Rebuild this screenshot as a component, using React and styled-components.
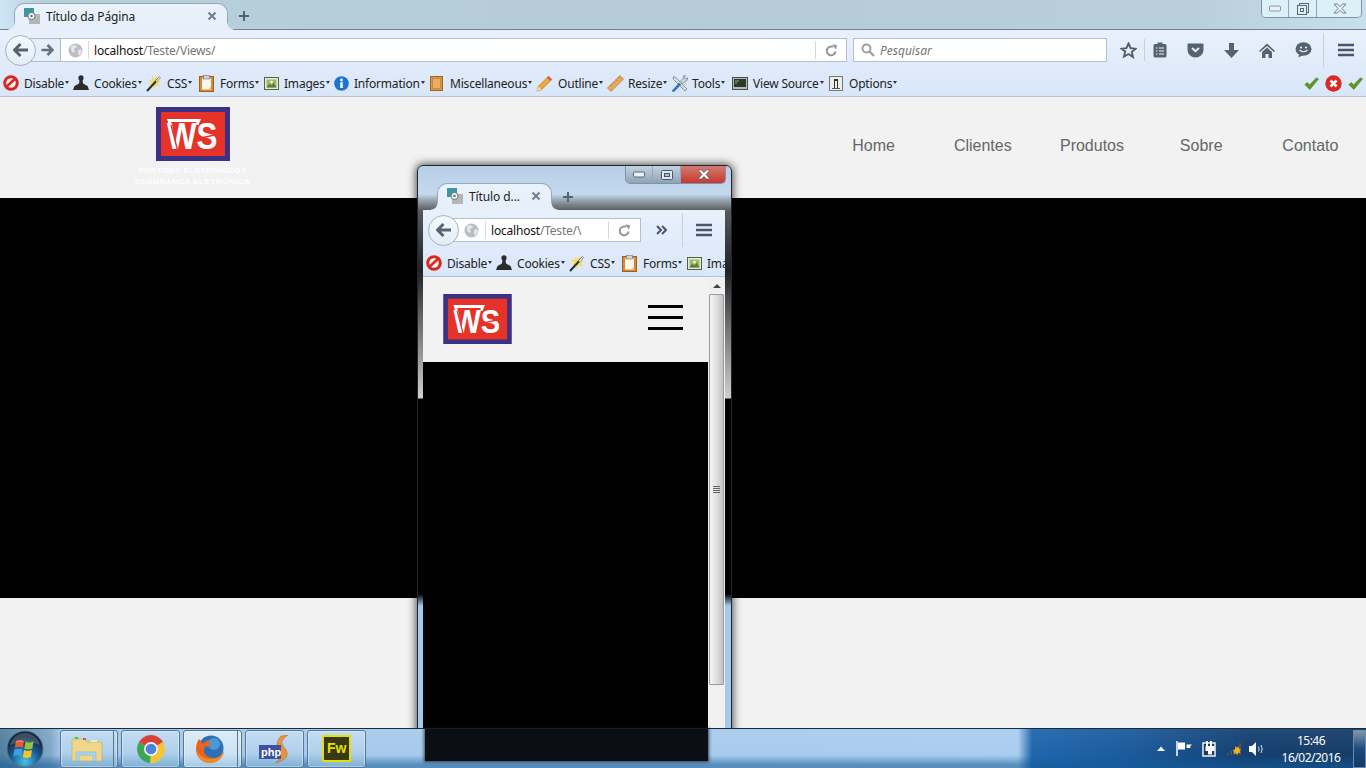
import React from "react";
import styled, { createGlobalStyle } from "styled-components";

const UI_FONT = `"Noto Sans", "Open Sans", sans-serif`;

const Global = createGlobalStyle`
  html, body { margin: 0; padding: 0; background: #f2f2f2; }
  * { box-sizing: border-box; }
`;

const Desktop = styled.div`
  position: relative;
  width: 1366px;
  height: 768px;
  overflow: hidden;
  display: flex;
  flex-direction: column;
  font-family: ${UI_FONT};
`;

const Browser = styled.div`
  flex: 1;
  min-height: 0;
  display: flex;
  flex-direction: column;
`;

/* ---------- tab strip ---------- */
const TabRow = styled.div`
  position: relative;
  height: ${p => p.$h}px;
  padding-left: 14px;
  display: flex;
  align-items: flex-end;
  flex-shrink: 0;
  background: ${p => p.$bg};
  border-bottom: ${p => (p.$line ? "1px solid #6f8294" : "0")};
`;

const TabShape = styled.div`
  position: relative;
  width: ${p => p.$w}px;
  height: 27px;
  margin-bottom: ${p => (p.$line ? "-1px" : "0")};
  padding: 0 10px 2px 9px;
  display: flex;
  align-items: center;
  gap: 5px;
  background: linear-gradient(#eaf2fb, #e6eff9);
  border: 1px solid #93a8bb;
  border-bottom: 0;
  border-radius: 10px 10px 0 0;
  color: #222;
  font-size: 12px;
  letter-spacing: -0.1px;

  &::before,
  &::after {
    content: "";
    position: absolute;
    bottom: 0;
    width: 7px;
    height: 7px;
  }
  &::before {
    left: -7px;
    background: radial-gradient(circle at 0 0, transparent 6px, #e6eff9 7px);
  }
  &::after {
    right: -7px;
    background: radial-gradient(circle at 100% 0, transparent 6px, #e6eff9 7px);
  }
`;

const TabTitle = styled.span`
  flex: 1;
  white-space: nowrap;
`;

const NewTab = styled.span`
  width: 28px;
  margin-left: 2px;
  height: 27px;
  display: flex;
  align-items: center;
  justify-content: center;
`;

const WinControls = styled.div`
  margin-left: auto;
  margin-right: ${p => p.$mr}px;
  align-self: flex-start;
  width: 101px;
  height: 18px;
  display: grid;
  grid-template-columns: 27px 28px 46px;
  border: 1px solid #7f93a6;
  border-top: 0;
  border-radius: 0 0 5px 5px;
  overflow: hidden;
`;

const WinCell = styled.div`
  display: flex;
  align-items: center;
  justify-content: center;
  border-right: ${p => (p.$last ? "0" : "1px solid #8fa5b8")};
  background: ${p => p.$bg};
`;

/* ---------- nav bar ---------- */
const NavRow = styled.div`
  height: 40px;
  flex-shrink: 0;
  display: flex;
  align-items: center;
  padding-left: ${p => p.$pl}px;
  background: linear-gradient(#e8f1fb, #dfeafa);
`;

const BackCircle = styled.div`
  position: relative;
  z-index: 2;
  width: 31px;
  height: 31px;
  flex-shrink: 0;
  display: flex;
  align-items: center;
  justify-content: center;
  border-radius: 50%;
  border: 1px solid #a3b3c2;
  background: linear-gradient(#f5f9fd, #e3ecf6);
`;

const ForwardSeg = styled.div`
  width: 31px;
  margin-left: -6px;
  height: 24px;
  padding-left: 5px;
  display: flex;
  align-items: center;
  justify-content: center;
  background: #e6eff9;
  border: 1px solid #aebdcc;
  border-left: 0;
  flex-shrink: 0;
`;

const UrlBar = styled.div`
  width: ${p => p.$w}px;
  height: ${p => p.$h}px;
  margin-left: ${p => p.$ml}px;
  padding-left: ${p => p.$pl}px;
  display: flex;
  align-items: center;
  background: #fff;
  border: 1px solid #b2c0cf;
  border-left-width: ${p => (p.$flush ? 0 : 1)}px;
  flex-shrink: 0;
  overflow: hidden;
`;

const UrlSep = styled.i`
  width: 1px;
  height: 18px;
  margin: ${p => p.$m};
  background: #d4dae0;
  flex-shrink: 0;
`;

const UrlText = styled.span`
  flex: 1;
  min-width: 0;
  overflow: hidden;
  white-space: nowrap;
  font-size: 12px;
  letter-spacing: -0.2px;
  color: #111;
  b {
    font-weight: 400;
    color: #777;
  }
`;

const SearchBar = styled.div`
  width: 254px;
  height: 24px;
  margin-left: 6px;
  padding-left: 7px;
  display: flex;
  align-items: center;
  gap: 5px;
  flex-shrink: 0;
  background: #fff;
  border: 1px solid #b2c0cf;
  font-size: 12px;
  font-style: italic;
  color: #767676;
`;

const ToolSlot = styled.span`
  width: ${p => p.$w}px;
  height: 30px;
  flex-shrink: 0;
  margin-left: ${p => p.$ml || 0}px;
  display: flex;
  align-items: center;
  justify-content: center;
`;

const ToolSep = styled.i`
  width: 1px;
  height: ${p => p.$h}px;
  background: #c4d0dc;
  flex-shrink: 0;
`;

/* ---------- bookmarks ---------- */
const BookRow = styled.div`
  height: 27px;
  flex-shrink: 0;
  padding-left: 3px;
  display: flex;
  align-items: center;
  overflow: hidden;
  background: linear-gradient(#dfeafa, #d8e7f8);
  border-bottom: 1px solid #b4c4d4;
`;

const BookItem = styled.div`
  width: ${p => p.$w}px;
  flex-shrink: 0;
  display: flex;
  align-items: center;
  gap: ${p => p.$gap || 4}px;
  font-size: 12px;
  letter-spacing: -0.2px;
  color: #222;
  white-space: nowrap;
`;

const Caret = styled.i`
  display: inline-block;
  width: 0;
  height: 0;
  margin: 0 0 3px 1px;
  vertical-align: middle;
  border-left: 2px solid transparent;
  border-right: 2px solid transparent;
  border-top: 3px solid #333;
`;

const BookRight = styled.div`
  margin-left: auto;
  margin-right: 3px;
  display: flex;
  align-items: center;
  gap: 6px;
`;

/* ---------- page in the big window ---------- */
const PageHeader = styled.header`
  height: 101px;
  flex-shrink: 0;
  display: flex;
  justify-content: space-between;
  background: #f2f2f2;
`;

const Brand = styled.div`
  width: 385px;
  padding-top: 10px;
  display: flex;
  flex-direction: column;
  align-items: center;
`;

const Tagline = styled.div`
  margin-top: 4px;
  font-family: "Liberation Sans", Arial, sans-serif;
  font-size: 8px;
  line-height: 11px;
  font-weight: 700;
  letter-spacing: 0.5px;
  color: #fdfdfd;
  text-align: center;
  white-space: nowrap;
`;

const SiteNav = styled.nav`
  width: 547px;
  padding: 0 1px 3px 0;
  display: grid;
  grid-template-columns: repeat(5, 1fr);
  align-items: center;
`;

const SiteLink = styled.a`
  text-align: center;
  font-family: "Liberation Sans", Arial, sans-serif;
  font-size: 16px;
  color: #666;
`;

const Hero = styled.div`
  height: 400px;
  flex-shrink: 0;
  background: #000;
`;

const Filler = styled.div`
  flex: 1;
  background: #f2f2f2;
`;

/* ---------- resized window ---------- */
const SmallWindow = styled.div`
  position: absolute;
  left: 417px;
  top: 165px;
  width: 315px;
  height: 603px;
  padding: 0 6px 0 5px;
  display: flex;
  flex-direction: column;
  border: 1px solid #20262c;
  border-radius: 6px 6px 0 0;
  box-shadow: 0 0 8px 1px rgba(0, 0, 0, 0.7);
  background: linear-gradient(
    #b6cfe7 0,
    #c4d9ee 28px,
    #8d979f 36px,
    #55595e 45px,
    #1e2226 105px,
    #777 165px,
    #cfcfcf 232px,
    #000 233px,
    #000 428px,
    #a5c9ee 440px
  );
`;

const Viewport = styled.div`
  flex: 1;
  min-height: 0;
  display: flex;
`;

const ViewContent = styled.div`
  width: 285px;
  display: flex;
  flex-direction: column;
`;

const MobileHeader = styled.div`
  height: 85px;
  flex-shrink: 0;
  padding: 0 25px 1px 20px;
  display: flex;
  align-items: center;
  justify-content: space-between;
  background: #f2f2f2;
`;

const Burger = styled.div`
  width: 35px;
  margin-bottom: 3px;
  display: flex;
  flex-direction: column;
  gap: 8px;
  i {
    height: 3px;
    background: #000;
  }
`;

const MobileBody = styled.div`
  flex: 1;
  background: #000;
`;

const ScrollBar = styled.div`
  width: 17px;
  display: flex;
  flex-direction: column;
  align-items: center;
  background: #f0f0f0;
`;

const ScrollUp = styled.i`
  margin: 7px 0 6px;
  border-left: 4px solid transparent;
  border-right: 4px solid transparent;
  border-bottom: 4px solid #444;
`;

const ScrollThumb = styled.div`
  width: 15px;
  height: 391px;
  display: flex;
  align-items: center;
  justify-content: center;
  border: 1px solid #9c9c9c;
  border-radius: 1px;
  background: linear-gradient(90deg, #f4f4f4, #e2e2e2 45%, #c2c2c2);
`;

const Grip = styled.div`
  width: 7px;
  display: flex;
  flex-direction: column;
  gap: 1px;
  i {
    height: 1px;
    background: #666;
  }
`;

/* ---------- taskbar ---------- */
const Taskbar = styled.footer`
  position: relative;
  z-index: 3;
  height: 40px;
  flex-shrink: 0;
  display: flex;
  align-items: center;
  border-top: 1px solid #1b2a3a;
  background:
    linear-gradient(rgba(255, 255, 255, 0.06) 0, rgba(255, 255, 255, 0) 26px, rgba(20, 90, 150, 0.55) 36px),
    linear-gradient(
      90deg,
      #4f7f9f 0,
      #7fa7c6 50px,
      #a5c8ea 62px,
      #a9cdef 1018px,
      #1f66ad 1032px,
      #1b5a9c 1130px,
      #143f70 1250px,
      #163c66 1366px
    );
`;

const StartSlot = styled.div`
  width: 60px;
  padding-left: 6px;
  flex-shrink: 0;
  display: flex;
  align-items: center;
`;

const TaskButtons = styled.div`
  display: flex;
  gap: 3px;
`;

const TaskButton = styled.div`
  position: relative;
  width: ${p => p.$w}px;
  height: 38px;
  padding-right: ${p => (p.$stack ? 5 : 0)}px;
  display: flex;
  align-items: center;
  justify-content: center;
  border: 1px solid #567993;
  border-radius: 3px;
  background: ${p =>
    p.$active
      ? "linear-gradient(#dcebf8, #cfe3f5 60%, #a3c9e6)"
      : "linear-gradient(#c2dcf2, #b1d0ec 60%, #7fb0d6)"};
  box-shadow: inset 0 0 0 1px rgba(255, 255, 255, 0.35);

  &::after {
    content: "";
    display: ${p => (p.$stack ? "block" : "none")};
    position: absolute;
    right: 3px;
    top: 0;
    bottom: 0;
    width: 1px;
    background: #567993;
  }
`;

const Refraction = styled.div`
  position: absolute;
  left: 425px;
  top: 0;
  width: 283px;
  height: 32px;
  background: #0b0f15;
  box-shadow: 0 0 3px 1px rgba(11, 15, 21, 0.7);
`;

const Tray = styled.div`
  margin-left: auto;
  display: flex;
  align-items: center;
`;

const TraySlot = styled.span`
  width: ${p => p.$w}px;
  display: flex;
  align-items: center;
  justify-content: center;
`;

const Clock = styled.div`
  width: 84px;
  text-align: center;
  font-size: 12px;
  line-height: 17px;
  letter-spacing: -0.5px;
  color: #fff;
`;

const ShowDesktop = styled.div`
  width: 13px;
  height: 38px;
  border: 1px solid #6f8aa5;
  background: linear-gradient(#7f97ad, #1b4a7d 50%, #123a66);
`;

/* ---------- drawings ---------- */
const Ic = styled.svg`
  display: block;
  flex-shrink: 0;
`;

const Favicon = () => (
  <Ic width="17" height="16" viewBox="0 0 17 16">
    <rect x="0" y="0" width="10" height="9" fill="#3f96a3" />
    <rect x="5" y="6" width="11" height="10" fill="#b5b5b5" />
    <circle cx="7.5" cy="8" r="3.6" fill="#f2f2f2" stroke="#5f7a80" />
    <circle cx="7.5" cy="8" r="1.2" fill="#56757c" />
  </Ic>
);

const TabClose = () => (
  <Ic width="10" height="10" viewBox="0 0 10 10">
    <path d="M1.5 1.5l7 7M8.5 1.5l-7 7" stroke="#75828d" strokeWidth="2.2" />
  </Ic>
);

const Plus = () => (
  <Ic width="12" height="12" viewBox="0 0 12 12">
    <path d="M6 1v10M1 6h10" stroke="#56646f" strokeWidth="2" />
  </Ic>
);

const MinGlyph = ({ c = "#55687a" }) => (
  <Ic width="12" height="7" viewBox="0 0 12 7">
    <rect x="0.5" y="1" width="11" height="5" rx="1" fill="#e8f0f6" stroke={c} />
  </Ic>
);

const RestoreGlyph = () => (
  <Ic width="12" height="12" viewBox="0 0 12 12">
    <rect x="2.5" y="0.5" width="9" height="9" fill="none" stroke="#55687a" />
    <rect x="0.5" y="2.5" width="9" height="9" fill="#e2eef6" stroke="#55687a" />
    <rect x="3.5" y="5.5" width="3" height="3" fill="none" stroke="#55687a" />
  </Ic>
);

const MaxGlyph = () => (
  <Ic width="12" height="10" viewBox="0 0 12 10">
    <rect x="0.5" y="0.5" width="11" height="9" rx="1" fill="#dfe8ef" stroke="#47586a" />
    <rect x="3.5" y="3.5" width="5" height="3" fill="#aebfcd" stroke="#47586a" />
  </Ic>
);

const CloseGlyph = ({ fill = "#e4edf3" }) => (
  <Ic width="14" height="11" viewBox="0 0 14 11">
    <path d="M1 1h3.4L7 3.6 9.6 1H13L9 5.5l4 4.5H9.6L7 7.4 4.4 10H1l4-4.5z" fill={fill} stroke="#56687a" strokeWidth="0.8" />
  </Ic>
);

const BackArrow = () => (
  <Ic width="16" height="14" viewBox="0 0 16 14">
    <path d="M7.5 1 1.5 7l6 6M2 7h13" fill="none" stroke="#566472" strokeWidth="3" />
  </Ic>
);

const ForwardArrow = () => (
  <Ic width="13" height="12" viewBox="0 0 13 12">
    <path d="M6.5 1l5 5-5 5M11 6H0.5" fill="none" stroke="#64717d" strokeWidth="2.6" />
  </Ic>
);

const Globe = () => (
  <Ic width="15" height="15" viewBox="0 0 15 15">
    <circle cx="7.5" cy="7.5" r="7" fill="#b9bec3" />
    <path d="M3 3l3-1 3 1-1 2-2 1 1 3-2 1-2-3zM10 7l3-1 1 3-3 4-1-3z" fill="#e4e6e8" />
  </Ic>
);

const Reload = () => (
  <Ic width="13" height="13" viewBox="0 0 13 13">
    <path d="M10.5 7.5A4.4 4.4 0 1 1 8 2.9" fill="none" stroke="#8f989f" strokeWidth="2" />
    <path d="M7 0.4l5 .6-1 4.8z" fill="#8f989f" />
  </Ic>
);

const Magnifier = () => (
  <Ic width="14" height="14" viewBox="0 0 14 14">
    <circle cx="5.5" cy="5.5" r="4" fill="none" stroke="#9aa0a6" strokeWidth="2" />
    <path d="M8.5 8.5l4.5 4.5" stroke="#9aa0a6" strokeWidth="2.4" />
  </Ic>
);

const Star = () => (
  <Ic width="17" height="17" viewBox="0 0 17 17">
    <path d="M8.5 1.5l2.1 4.7 5 .5-3.8 3.3 1.2 5L8.5 12l-4.5 2.5 1.2-5L1.4 6.7l5-.5z" fill="none" stroke="#4f5d6a" strokeWidth="1.9" />
  </Ic>
);

const ReadingList = () => (
  <Ic width="14" height="16" viewBox="0 0 14 16">
    <rect x="0.5" y="2" width="13" height="13.5" rx="1.5" fill="#55636f" />
    <rect x="4.5" y="0.5" width="5" height="3" fill="#55636f" />
    <path d="M3 6h1.5M6 6h5M3 9h1.5M6 9h5M3 12h1.5M6 12h5" stroke="#e6eff9" strokeWidth="1.2" />
  </Ic>
);

const Pocket = () => (
  <Ic width="17" height="15" viewBox="0 0 17 15">
    <path d="M1.5 0.5h14a1 1 0 0 1 1 1V7a8 7.5 0 0 1-16 0V1.5a1 1 0 0 1 1-1z" fill="#55636f" />
    <path d="M5 5l3.5 3.2L12 5" fill="none" stroke="#e6eff9" strokeWidth="2" />
  </Ic>
);

const Download = () => (
  <Ic width="15" height="15" viewBox="0 0 15 15">
    <path d="M5 0h5v7h5l-7.500 8L0 7h5z" fill="#55636f" />
  </Ic>
);

const Home = () => (
  <Ic width="16" height="15" viewBox="0 0 16 15">
    <path d="M8 0.500 16 8l-1 1-7-6-7 6-1-1z" fill="#55636f" />
    <path d="M3 9l5-4.500L13 9v6H9.500v-4h-3v4H3z" fill="#55636f" />
  </Ic>
);

const Smile = () => (
  <Ic width="17" height="16" viewBox="0 0 17 16">
    <ellipse cx="8.500" cy="7" rx="8" ry="6.800" fill="#55636f" />
    <path d="M4 12l-.5 3.500L8 13z" fill="#55636f" />
    <circle cx="6" cy="5.500" r="1.100" fill="#e6eff9" />
    <circle cx="11" cy="5.500" r="1.100" fill="#e6eff9" />
    <path d="M4.500 8q4 3.500 8 0" fill="none" stroke="#e6eff9" strokeWidth="1.200" />
  </Ic>
);

const MenuGlyph = () => (
  <Ic width="16" height="14" viewBox="0 0 16 14">
    <path d="M0 2h16M0 7h16M0 12h16" stroke="#49576a" strokeWidth="2.600" />
  </Ic>
);

const Chevrons = () => (
  <Ic width="11" height="10" viewBox="0 0 11 10">
    <path d="M1 1l4 4-4 4M6 1l4 4-4 4" fill="none" stroke="#49576a" strokeWidth="2" />
  </Ic>
);

const IconDisable = () => (
  <Ic width="16" height="16" viewBox="0 0 16 16">
    <circle cx="8" cy="8" r="7.800" fill="#d8281e" />
    <circle cx="8" cy="8" r="4.800" fill="#f7f2ee" />
    <path d="M3.800 11.500 11.800 4" stroke="#d8281e" strokeWidth="2.400" />
  </Ic>
);

const IconCookies = () => (
  <Ic width="16" height="16" viewBox="0 0 16 16">
    <ellipse cx="8" cy="3" rx="2.600" ry="2.800" fill="#2c2c2c" />
    <path d="M6.500 5h3L10 8.500l4.500 2.500L16 15H0l1.500-4L6 8.500z" fill="#2c2c2c" />
  </Ic>
);

const IconCss = () => (
  <Ic width="16" height="17" viewBox="0 0 16 17">
    <path d="M6 1l2 3 3-3 0 4 4 1-3 2 2 4-4-2-2 4-1-4-4 0 2-3-3-2 4-.5z" fill="#f1dd68" />
    <path d="M1 16 14 2" stroke="#2d2d2d" strokeWidth="2" />
    <path d="M10 6.500 14 2" stroke="#e5e5e5" strokeWidth="1.400" />
  </Ic>
);

const IconForms = () => (
  <Ic width="15" height="17" viewBox="0 0 15 17">
    <rect x="0.500" y="1.500" width="14" height="15" fill="#d98a36" stroke="#9f5f1e" />
    <rect x="3" y="3.500" width="9" height="11" fill="#fbf6ea" />
    <path d="M12 14.500l-3 0 3-3z" fill="#e0c9a0" />
    <rect x="4.500" y="0.500" width="6" height="3.500" fill="#cfd3d6" stroke="#7e8386" strokeWidth="0.700" />
  </Ic>
);

const IconImages = () => (
  <Ic width="15" height="13" viewBox="0 0 15 13">
    <rect x="0.500" y="0.500" width="14" height="12" fill="#e4ecd6" stroke="#55603f" />
    <rect x="2.500" y="2.500" width="10" height="8" fill="#9ab96a" />
    <path d="M2.500 10.500l3-4 2 2 2-3 3 5z" fill="#5e7d3c" />
    <circle cx="7.500" cy="5" r="1.500" fill="#f0ecc8" />
  </Ic>
);

const IconInfo = () => (
  <Ic width="15" height="15" viewBox="0 0 15 15">
    <circle cx="7.500" cy="7.500" r="7.300" fill="#1d74cf" />
    <circle cx="7.500" cy="4" r="1.400" fill="#fff" />
    <rect x="6.200" y="6.200" width="2.600" height="5.800" fill="#fff" />
  </Ic>
);

const IconMisc = () => (
  <Ic width="13" height="15" viewBox="0 0 13 15">
    <rect x="0.500" y="0.500" width="12" height="14" fill="#dd9a4a" stroke="#9d6423" />
    <rect x="2.500" y="2.500" width="8" height="10" fill="#e9b063" stroke="#b8813b" strokeWidth="0.700" />
  </Ic>
);

const IconOutline = () => (
  <Ic width="17" height="17" viewBox="0 0 17 17">
    <path d="M1 16l1.200-4.500L12.500 1.200l3.300 3.300L5.500 14.800z" fill="#eda93a" stroke="#b9761f" strokeWidth="0.700" />
    <path d="M12.500 1.200l3.300 3.300-1.500 1.500L11 2.700z" fill="#d9534b" />
    <path d="M1 16l1.200-4.500 3.300 3.300z" fill="#f0dcb6" />
  </Ic>
);

const IconResize = () => (
  <Ic width="17" height="17" viewBox="0 0 17 17">
    <path d="M0.500 13 13 0.500 16.500 4 4 16.500z" fill="#e7a957" stroke="#ad7228" strokeWidth="0.700" />
    <path d="M4 9.500l1.500 1.500M6.500 7l1.500 1.500M9 4.500l1.500 1.500M11.500 2l1.500 1.500" stroke="#9c6a2b" strokeWidth="0.700" />
  </Ic>
);

const IconTools = () => (
  <Ic width="17" height="17" viewBox="0 0 17 17">
    <path d="M2 2l2.200 0 11.800 12-2 2L2.500 4.500z" fill="#d9dde0" stroke="#64717a" strokeWidth="0.700" />
    <path d="M1 16l7-8 1.800 1.800-7 7z" fill="#2c7bc8" stroke="#1d5792" strokeWidth="0.500" />
    <path d="M9 6.500l3.500-3.500V.8h2l-1.200 2 1.200 1.200 2-1.200v2.200L13 7.500 10.800 9z" fill="#cfd4d8" stroke="#5f6b74" strokeWidth="0.600" />
  </Ic>
);

const IconSource = () => (
  <Ic width="16" height="13" viewBox="0 0 16 13">
    <rect x="0.500" y="0.500" width="15" height="12" fill="#b7bab5" stroke="#4a4d49" />
    <rect x="2" y="2" width="12" height="8" fill="#2c3a2c" />
    <path d="M3 4h4M3 6h2" stroke="#7fae74" />
  </Ic>
);

const IconOptions = () => (
  <Ic width="14" height="15" viewBox="0 0 14 15">
    <rect x="0.500" y="0.500" width="13" height="14" fill="#eeeeea" stroke="#77776f" />
    <path d="M5 3h4v9H8V5H6v7H5z" fill="#333" />
    <rect x="3" y="12" width="8" height="1" fill="#555" />
  </Ic>
);

const Check = () => (
  <Ic width="15" height="13" viewBox="0 0 15 13">
    <path d="M0.800 7.500 3.500 5.500 5.500 8 12.500 0.800 14.500 2 5.800 12.500z" fill="#5e9a1a" stroke="#3f7510" strokeWidth="0.500" />
  </Ic>
);

const RedX = () => (
  <Ic width="17" height="17" viewBox="0 0 17 17">
    <circle cx="8.500" cy="8.500" r="8.200" fill="#dd2a20" />
    <path d="M5.500 5.500l6 6M11.500 5.500l-6 6" stroke="#fff" strokeWidth="2.600" />
  </Ic>
);

const LogoMark = ({ w, h }) => (
  <Ic width={w} height={h} viewBox="0 0 74 54">
    <rect width="74" height="54" fill="#3d3184" />
    <rect x="5" y="5" width="64" height="44" fill="#e6332a" />
    <text
      x="12.600"
      y="42"
      fontFamily="Liberation Sans, Arial, sans-serif"
      fontWeight="700"
      fontSize="36"
      fill="#fff"
      transform="scale(.87 1)"
    >
      WS
    </text>
    <path d="M11 12h34l-2.500 6-2.500 0 .5-3H15l1 3h-3z" fill="#fff" />
    <path d="M15 18l6.500 25M45 31l18-4" stroke="#e6332a" strokeWidth="1.400" />
  </Ic>
);

const PhpIcon = () => (
  <Ic width="32" height="28" viewBox="0 0 32 28">
    <path d="M22 1c2 0 6-1 7-1-3 2-7 6-6 9 1 3 6 6 5 11-1 5-8 7-12 8 4-3 7-6 6-9-1-3-5-6-4-10 .5-3 2-6 4-8z" fill="#e9943a" stroke="#b9651d" strokeWidth="0.500" />
    <rect x="0" y="10" width="22" height="14" fill="#3f4fa3" />
    <text x="2" y="21" fontFamily="Liberation Sans, Arial, sans-serif" fontWeight="700" fontSize="11" fill="#fff">php</text>
  </Ic>
);

const FwIcon = () => (
  <Ic width="29" height="27" viewBox="0 0 29 27">
    <rect x="1" y="1" width="27" height="25" fill="#3a3618" stroke="#e4e000" strokeWidth="2" />
    <text x="5" y="18" fontFamily="Liberation Sans, Arial, sans-serif" fontWeight="700" fontSize="14" fill="#e4e000">Fw</text>
  </Ic>
);

const ExplorerIcon = () => (
  <Ic width="32" height="28" viewBox="0 0 32 28">
    <path d="M1 5a1 1 0 0 1 1-1h11l3 3h14a1 1 0 0 1 1 1v18H1z" fill="#f0d68a" stroke="#c4a75a" strokeWidth="0.600" />
    <rect x="4" y="2" width="3" height="2" fill="#3cc654" />
    <rect x="12" y="3" width="3" height="2" fill="#d8584b" />
    <rect x="20" y="5" width="6" height="2" fill="#f7ecc4" />
    <path d="M5 26v-9h20v9h-3v-6H8v6z" fill="#a8d6ee" stroke="#78aed0" strokeWidth="0.500" />
  </Ic>
);

const ChromeIcon = () => (
  <Ic width="30" height="30" viewBox="0 0 30 30">
    <path d="M15 15 2.900 8A14 14 0 0 1 27.100 8z" fill="#d8423a" />
    <path d="M15 15 27.100 8A14 14 0 0 1 14 29z" fill="#f1c63a" />
    <path d="M15 15 14 29A14 14 0 0 1 2.900 8z" fill="#3ea552" />
    <circle cx="15" cy="15" r="7" fill="#f4f4f4" />
    <circle cx="15" cy="15" r="5.300" fill="#4d84de" />
  </Ic>
);

const FirefoxIcon = () => (
  <Ic width="30" height="30" viewBox="0 0 30 30">
    <circle cx="16" cy="14" r="12.500" fill="#2b6fb4" />
    <circle cx="19" cy="10" r="6" fill="#4b9ad6" />
    <path d="M4 5c-2 3-3 6-3 10 0 8 6 14 14 14 7 0 13-5 14-12-2 4-5 7-10 7-6 0-10-3-10-8 0-2 1-3 2-4 1 1 3 1 5 1 0-1-1-2-3-2 0-2 2-3 3-5-4 0-6 1-8 4-1-2-2-3-4-5z" fill="#e8641f" />
    <path d="M1.500 17c1 7 7 12 13.500 12 7 0 13-5 14-12-3 5-7 8-13 8-6 0-11-3-14.500-8z" fill="#f08a24" />
  </Ic>
);

const StartOrb = () => (
  <Ic width="38" height="38" viewBox="0 0 38 38">
    <defs>
      <radialGradient id="orb" cx="50%" cy="85%" r="70%">
        <stop offset="0" stopColor="#47c2e8" />
        <stop offset="0.55" stopColor="#1b5c96" />
        <stop offset="1" stopColor="#12263e" />
      </radialGradient>
    </defs>
    <circle cx="19" cy="19" r="18" fill="url(#orb)" stroke="#5a7387" />
    <path d="M10 11c3-1.500 5-1.500 8 0l-1.200 7c-3-1.500-5-1.500-8 0z" fill="#e8572f" />
    <path d="M19.500 11.500c3 1.200 5 1.200 8 0l-1.200 7c-3 1.200-5 1.200-8 0z" fill="#8ec63f" />
    <path d="M8.500 19.500c3-1.500 5-1.500 8 0l-1.200 7c-3-1.500-5-1.500-8 0z" fill="#3d9fe0" />
    <path d="M18 20c3 1.200 5 1.200 8 0l-1.200 7c-3 1.200-5 1.200-8 0z" fill="#f5c32c" />
    <path d="M4 15C6 6 14 3 19 3s13 3 15 12c-8-4-22-4-30 0z" fill="#fff" opacity="0.18" />
  </Ic>
);

const TrayUp = () => (
  <Ic width="8" height="5" viewBox="0 0 8 5">
    <path d="M0 5l4-4.500L8 5z" fill="#f2f6fa" />
  </Ic>
);

const TrayFlag = () => (
  <Ic width="16" height="15" viewBox="0 0 16 15">
    <path d="M1 0v15" stroke="#fff" strokeWidth="1.500" />
    <path d="M2 1.500h7v7H2z" fill="#fff" />
    <path d="M10.500 3.500H16l-2 2 .5 1.500h-4z" fill="#fff" />
  </Ic>
);

const TrayPower = () => (
  <Ic width="14" height="16" viewBox="0 0 14 16">
    <rect x="1" y="2" width="12" height="13" fill="#1d3b5d" stroke="#fff" strokeWidth="1.400" />
    <rect x="4" y="0" width="2" height="5" fill="#fff" />
    <rect x="8" y="0" width="2" height="5" fill="#fff" />
    <rect x="3.500" y="5" width="9" height="5" fill="#fff" />
    <rect x="6" y="10" width="4" height="3.500" fill="#fff" />
  </Ic>
);

const TrayNetwork = () => (
  <Ic width="16" height="14" viewBox="0 0 16 14">
    <path d="M1 11h2v2H1zM4 9h2v4H4zM7 7h2v6H7zM10 4h2v9h-2zM13 1h2v12h-2z" fill="#4a5560" />
    <path d="M9.500 4l1 2 2-1.500.5 2.300 2 .7-1.500 1.500 1 2-2.300-.3-.7 2-1.700-1.500L8 12l.4-2.200L6.500 8.500 8.700 8z" fill="#f5b21e" />
  </Ic>
);

const TraySound = () => (
  <Ic width="16" height="14" viewBox="0 0 16 14">
    <path d="M0 4h3l4-4v14l-4-4H0z" fill="#fff" />
    <path d="M9.500 4.500q1.500 2.500 0 5M12 3q2.500 4 0 8" fill="none" stroke="#d5deea" />
  </Ic>
);

/* ---------- data ---------- */
const bigMarks = [
  { label: "Disable", Icon: IconDisable, w: 70, gap: 5 },
  { label: "Cookies", Icon: IconCookies, w: 73, gap: 5 },
  { label: "CSS", Icon: IconCss, w: 53, gap: 5 },
  { label: "Forms", Icon: IconForms, w: 65, gap: 6 },
  { label: "Images", Icon: IconImages, w: 70, gap: 5 },
  { label: "Information", Icon: IconInfo, w: 96, gap: 5 },
  { label: "Miscellaneous", Icon: IconMisc, w: 106, gap: 7 },
  { label: "Outline", Icon: IconOutline, w: 71, gap: 5 },
  { label: "Resize", Icon: IconResize, w: 64, gap: 4 },
  { label: "Tools", Icon: IconTools, w: 61, gap: 4 },
  { label: "View Source", Icon: IconSource, w: 97, gap: 5 },
  { label: "Options", Icon: IconOptions, w: 80, gap: 6 }
];

const smallMarks = [
  { label: "Disable", Icon: IconDisable, w: 70, gap: 5 },
  { label: "Cookies", Icon: IconCookies, w: 73, gap: 5 },
  { label: "CSS", Icon: IconCss, w: 53, gap: 5 },
  { label: "Forms", Icon: IconForms, w: 65, gap: 6 },
  { label: "Images", Icon: IconImages, w: 70, gap: 5, plain: true }
];

const links = ["Home", "Clientes", "Produtos", "Sobre", "Contato"];

const Bookmarks = ({ items, children }) => (
  <BookRow>
    {items.map(({ label, Icon, w, gap, plain }) => (
      <BookItem key={label} $w={w} $gap={gap}>
        <Icon />
        <span>
          {label}
          {!plain && <Caret />}
        </span>
      </BookItem>
    ))}
    {children}
  </BookRow>
);

export default function App() {
  return (
    <Desktop>
      <Global />
      <Browser>
        <TabRow
          $h={30}
          $line
          $bg="linear-gradient(90deg, #cfe6f7 0, #b8cfdc 40px, #b5cbd8 700px, #b9cfd9 1200px, #c9dfec 1366px)"
        >
          <TabShape $w={214} $line>
            <Favicon />
            <TabTitle>Título da Página</TabTitle>
            <TabClose />
          </TabShape>
          <NewTab>
            <Plus />
          </NewTab>
          <WinControls $mr={4}>
            <WinCell $bg="#dcf0f8">
              <MinGlyph c="#8a99a5" />
            </WinCell>
            <WinCell $bg="#dcf0f8">
              <RestoreGlyph />
            </WinCell>
            <WinCell $bg="#dcf0f8" $last>
              <CloseGlyph />
            </WinCell>
          </WinControls>
        </TabRow>
        <NavRow $pl={5}>
          <BackCircle>
            <BackArrow />
          </BackCircle>
          <ForwardSeg>
            <ForwardArrow />
          </ForwardSeg>
          <UrlBar $w={786} $h={24} $ml={0} $pl={7} $flush>
            <Globe />
            <UrlSep $m="0 5px 0 5px" />
            <UrlText>
              localhost<b>/Teste/Views/</b>
            </UrlText>
            <UrlSep $m="0" />
            <ToolSlot $w={30}>
              <Reload />
            </ToolSlot>
          </UrlBar>
          <SearchBar>
            <Magnifier />
            Pesquisar
          </SearchBar>
          <ToolSlot $w={32} $ml={5}>
            <Star />
          </ToolSlot>
          <ToolSep $h={22} />
          <ToolSlot $w={29}>
            <ReadingList />
          </ToolSlot>
          <ToolSlot $w={42}>
            <Pocket />
          </ToolSlot>
          <ToolSlot $w={30}>
            <Download />
          </ToolSlot>
          <ToolSlot $w={42}>
            <Home />
          </ToolSlot>
          <ToolSlot $w={30}>
            <Smile />
          </ToolSlot>
          <ToolSlot $w={5} />
          <ToolSep $h={34} />
          <ToolSlot $w={43}>
            <MenuGlyph />
          </ToolSlot>
        </NavRow>
        <Bookmarks items={bigMarks}>
          <BookRight>
            <Check />
            <RedX />
            <Check />
          </BookRight>
        </Bookmarks>
        <PageHeader>
          <Brand>
            <LogoMark w={74} h={54} />
            <Tagline>
              PORTÕES ELETRÔNICOS
              <br />
              SEGURANÇA ELETRÔNICA
            </Tagline>
          </Brand>
          <SiteNav>
            {links.map(l => (
              <SiteLink key={l}>{l}</SiteLink>
            ))}
          </SiteNav>
        </PageHeader>
        <Hero />
        <Filler />
      </Browser>

      <SmallWindow>
        <TabRow $h={44} $bg="transparent">
          <TabShape $w={115}>
            <Favicon />
            <TabTitle>Título d...</TabTitle>
            <TabClose />
          </TabShape>
          <NewTab>
            <Plus />
          </NewTab>
          <WinControls $mr={-1}>
            <WinCell $bg="linear-gradient(#c3d3e2, #8da3b6)">
              <MinGlyph />
            </WinCell>
            <WinCell $bg="linear-gradient(#c3d3e2, #8da3b6)">
              <MaxGlyph />
            </WinCell>
            <WinCell $bg="linear-gradient(#d77a6f, #c4392f)" $last>
              <CloseGlyph fill="#fff" />
            </WinCell>
          </WinControls>
        </TabRow>
        <NavRow $pl={5}>
          <BackCircle>
            <BackArrow />
          </BackCircle>
          <UrlBar $w={196} $h={24} $ml={-14} $pl={18}>
            <Globe />
            <UrlSep $m="0 5px 0 6px" />
            <UrlText>
              localhost<b>/Teste/\</b>
            </UrlText>
            <UrlSep $m="0" />
            <ToolSlot $w={31}>
              <Reload />
            </ToolSlot>
          </UrlBar>
          <ToolSlot $w={41}>
            <Chevrons />
          </ToolSlot>
          <ToolSep $h={34} />
          <ToolSlot $w={41}>
            <MenuGlyph />
          </ToolSlot>
        </NavRow>
        <Bookmarks items={smallMarks} />
        <Viewport>
          <ViewContent>
            <MobileHeader>
              <LogoMark w={69} h={50} />
              <Burger>
                <i />
                <i />
                <i />
              </Burger>
            </MobileHeader>
            <MobileBody />
          </ViewContent>
          <ScrollBar>
            <ScrollUp />
            <ScrollThumb>
              <Grip>
                <i />
                <i />
                <i />
                <i />
              </Grip>
            </ScrollThumb>
          </ScrollBar>
        </Viewport>
      </SmallWindow>

      <Taskbar>
        <Refraction />
        <StartSlot>
          <StartOrb />
        </StartSlot>
        <TaskButtons>
          <TaskButton $w={58} $stack>
            <ExplorerIcon />
          </TaskButton>
          <TaskButton $w={59}>
            <ChromeIcon />
          </TaskButton>
          <TaskButton $w={59} $stack $active>
            <FirefoxIcon />
          </TaskButton>
          <TaskButton $w={59}>
            <PhpIcon />
          </TaskButton>
          <TaskButton $w={59}>
            <FwIcon />
          </TaskButton>
        </TaskButtons>
        <Tray>
          <TraySlot $w={25}>
            <TrayUp />
          </TraySlot>
          <TraySlot $w={22}>
            <TrayFlag />
          </TraySlot>
          <TraySlot $w={28}>
            <TrayPower />
          </TraySlot>
          <TraySlot $w={22}>
            <TrayNetwork />
          </TraySlot>
          <TraySlot $w={24}>
            <TraySound />
          </TraySlot>
          <Clock>
            15:46
            <br />
            16/02/2016
          </Clock>
          <ShowDesktop />
        </Tray>
      </Taskbar>
    </Desktop>
  );
}
